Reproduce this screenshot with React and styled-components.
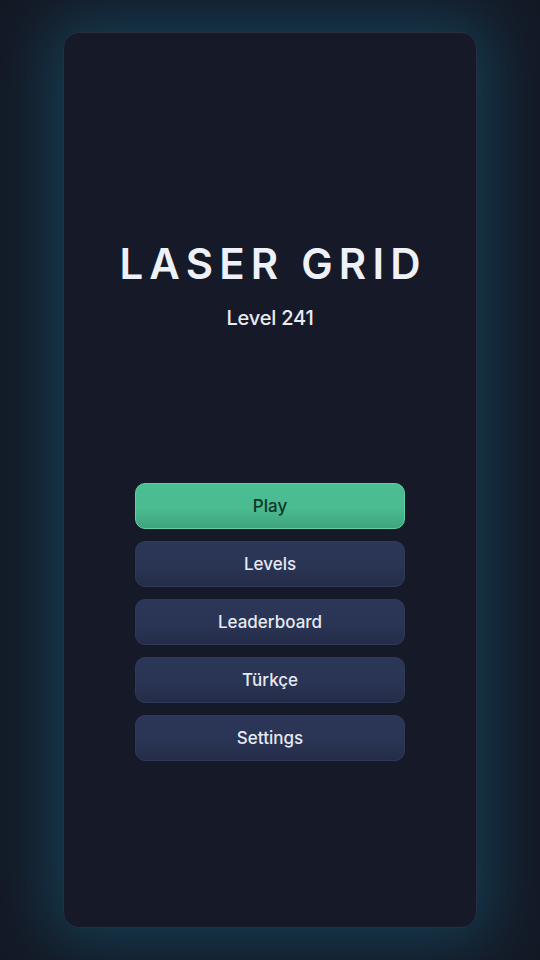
import React from 'react';
import styled, { createGlobalStyle } from 'styled-components';

const GlobalStyle = createGlobalStyle`
  html, body {
    margin: 0;
    padding: 0;
    background: #141925;
  }
  body {
    font-family: Inter, "Noto Sans", sans-serif;
  }
`;

const Screen = styled.div`
  width: 540px;
  height: 960px;
  box-sizing: border-box;
  padding: 32px 63px;
  display: flex;
  background: #141925;
  overflow: hidden;
`;

const Card = styled.div`
  flex: 1;
  display: flex;
  flex-direction: column;
  align-items: center;
  box-sizing: border-box;
  padding-top: 206px;
  background: #161a28;
  border: 1px solid #262e40;
  border-radius: 16px;
  box-shadow: 0 0 60px 16px rgba(22, 84, 110, 0.6);
`;

const Title = styled.h1`
  margin: 0;
  font-size: 42px;
  line-height: 50px;
  font-weight: 600;
  letter-spacing: 6.2px;
  margin-right: -6.2px;
  color: #eef1f8;
`;

const Subtitle = styled.div`
  margin-top: 17px;
  font-size: 20px;
  line-height: 24px;
  font-weight: 500;
  color: #e8ebf3;
  letter-spacing: -0.01em;
`;

const Menu = styled.nav`
  margin-top: 153px;
  width: 270px;
  display: flex;
  flex-direction: column;
  gap: 12px;
`;

const MenuButton = styled.button`
  height: 46px;
  width: 100%;
  box-sizing: border-box;
  border-radius: 10px;
  font-family: inherit;
  font-size: 17px;
  font-weight: 500;
  cursor: pointer;
  color: ${p => (p.$primary ? '#0f3527' : '#e6e9f4')};
  border: 1px solid ${p => (p.$primary ? '#5fd0a4' : '#303a58')};
  background: ${p =>
    p.$primary
      ? 'linear-gradient(180deg, #4cbe93 0%, #4bbb90 55%, #3ea47d 100%)'
      : 'linear-gradient(180deg, #2c3658 0%, #2a3454 55%, #242d48 100%)'};
`;

const items = ['Levels', 'Leaderboard', 'Türkçe', 'Settings'];

export default function App() {
  return (
    <>
      <GlobalStyle />
      <Screen>
        <Card>
          <Title>LASER GRID</Title>
          <Subtitle>Level 241</Subtitle>
          <Menu>
            <MenuButton $primary>Play</MenuButton>
            {items.map(label => (
              <MenuButton key={label}>{label}</MenuButton>
            ))}
          </Menu>
        </Card>
      </Screen>
    </>
  );
}
